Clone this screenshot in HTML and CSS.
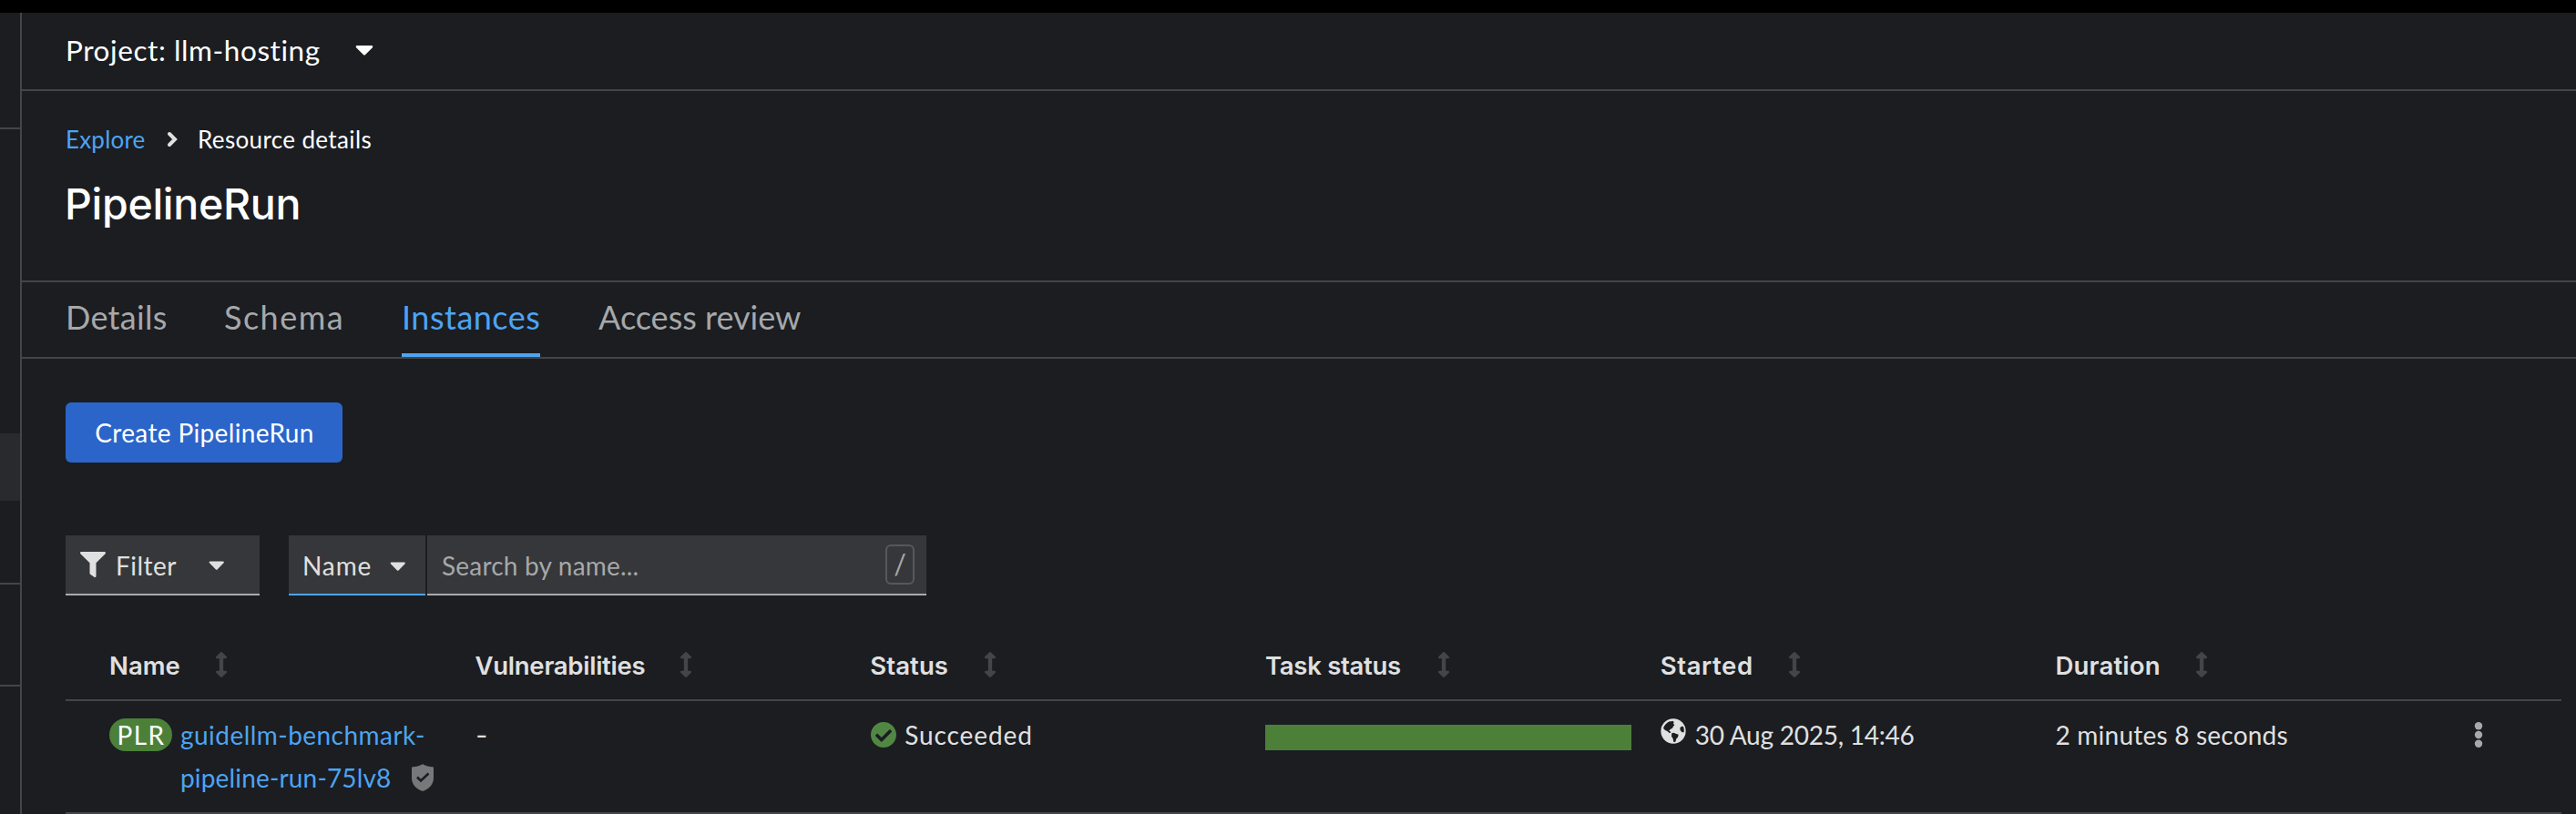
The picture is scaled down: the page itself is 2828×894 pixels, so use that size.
FILE: index.html
```
<!DOCTYPE html>
<html lang="en">
<head>
<meta charset="utf-8">
<title>PipelineRun</title>
<link rel="stylesheet" href="styles.css">
</head>
<body>
<svg class="defs" aria-hidden="true">
  <symbol id="caret" viewBox="0 0 320 512"><path d="M31.3 192h257.3c17.8 0 26.7 21.5 14.1 34.1L174.1 354.7c-7.8 7.8-20.5 7.8-28.3 0L17.2 226.1C4.6 213.5 13.5 192 31.3 192z"/></symbol>
  <symbol id="sort" viewBox="0 0 256 512"><path d="M214.059 377.941H168V134.059h46.059c21.382 0 32.09-25.851 16.971-40.971L144.971 7.029c-9.373-9.373-24.568-9.373-33.941 0L24.971 93.088c-15.119 15.119-4.411 40.971 16.971 40.971H88v243.882H41.941c-21.382 0-32.09 25.851-16.971 40.971l86.059 86.059c9.373 9.373 24.568 9.373 33.941 0l86.059-86.059c15.12-15.119 4.412-40.971-16.97-40.971z"/></symbol>
</svg>
<div class="masthead"></div>
<div class="shell">
  <nav class="sidebar">
    <div class="side-block side-first"></div>
    <div class="side-block side-second"><div class="side-current"></div></div>
    <div class="side-block side-third"></div>
  </nav>
  <main class="main">
    <div class="project-bar">
      <span class="project-name">Project: llm-hosting</span>
      <svg class="project-caret"><use href="#caret"/></svg>
    </div>
    <header class="page-head">
      <div class="breadcrumb">
        <a class="crumb-link">Explore</a>
        <svg class="crumb-sep" viewBox="0 0 12 18"><path d="M3 3l6 6-6 6"/></svg>
        <span class="crumb-here">Resource details</span>
      </div>
      <h1 class="title">PipelineRun</h1>
    </header>
    <div class="tabs">
      <a class="tab tab-details">Details</a>
      <a class="tab tab-schema">Schema</a>
      <a class="tab tab-instances active">Instances</a>
      <a class="tab tab-access">Access review</a>
    </div>
    <section class="content">
      <button class="create">Create PipelineRun</button>
      <div class="toolbar">
        <div class="control filter">
          <svg class="filter-icon" viewBox="0 0 512 512"><path d="M487.976 0H24.028C2.71 0-8.047 25.866 7.058 40.971L192 225.941V432c0 7.831 3.821 15.17 10.237 19.662l80 55.98C298.02 518.69 320 507.493 320 487.98V225.941l184.947-184.97C520.021 25.896 509.338 0 487.976 0z"/></svg>
          <span class="filter-label">Filter</span>
          <svg class="control-caret"><use href="#caret"/></svg>
        </div>
        <div class="control attribute">
          <span class="attribute-label">Name</span>
          <svg class="control-caret low"><use href="#caret"/></svg>
        </div>
        <div class="control search">
          <span class="placeholder">Search by name...</span>
          <kbd class="key">/</kbd>
        </div>
      </div>
      <div class="table">
        <div class="row head">
          <div class="th"><span>Name</span><svg class="sort"><use href="#sort"/></svg></div>
          <div class="th"><span class="t-vuln">Vulnerabilities</span><svg class="sort"><use href="#sort"/></svg></div>
          <div class="th"><span class="t-status">Status</span><svg class="sort"><use href="#sort"/></svg></div>
          <div class="th"><span class="t-task">Task status</span><svg class="sort"><use href="#sort"/></svg></div>
          <div class="th"><span class="t-started">Started</span><svg class="sort"><use href="#sort"/></svg></div>
          <div class="th"><span class="t-duration">Duration</span><svg class="sort"><use href="#sort"/></svg></div>
          <div class="th"></div>
        </div>
        <div class="row body">
          <div class="td name-cell">
            <span class="badge">PLR</span>
            <div class="run">
              <a class="run-line first">guidellm-benchmark-</a>
              <div class="run-second">
                <a class="run-line second">pipeline-run-75lv8</a>
                <svg class="shield" viewBox="0 0 24 30"><path class="shield-body" d="M12 0c2 1.700 7 3.200 12 3.500v12c0 7-5 12-12 14.500C5 27.500 0 22.500 0 15.500v-12C5 3.200 10 1.700 12 0z"/><path class="shield-check" d="M6 14.500l4 4 8.500-8"/></svg>
              </div>
            </div>
          </div>
          <div class="td"><span class="dash">-</span></div>
          <div class="td status-cell">
            <svg class="ok" viewBox="8 8 496 496"><path d="M504 256c0 136.967-111.033 248-248 248S8 392.967 8 256 119.033 8 256 8s248 111.033 248 248zM227.314 387.314l184-184c6.248-6.248 6.248-16.379 0-22.627l-22.627-22.627c-6.248-6.249-16.379-6.249-22.628 0L216 308.118l-70.059-70.059c-6.248-6.248-16.379-6.248-22.628 0l-22.627 22.627c-6.248 6.248-6.248 16.379 0 22.627l104 104c6.249 6.249 16.379 6.249 22.628.001z"/></svg>
            <span class="t-succeeded">Succeeded</span>
          </div>
          <div class="td"><div class="progress"></div></div>
          <div class="td started-cell">
            <svg class="globe" viewBox="0 0 84 84"><circle cx="42" cy="42" r="41"/><path d="M9 32C13 22 20 14 30 10l6 0 4-2 4 4-2 5 4 5-4 4-3 6-7 4-4 5 4 2 2 4-5 1-7-6-7-3zM37 49l6-2 7 3 9 3-2 9-5 5-3 10-6 1-2-11-5-8zM64 31l6-5 5 1c2 5 3 12 2 19l-6 0-6-6z"/></svg>
            <span class="t-date">30 Aug 2025, 14:46</span>
          </div>
          <div class="td t-length">2 minutes 8 seconds</div>
          <div class="td kebab-cell"><svg class="kebab" viewBox="0 0 10 28"><circle cx="5" cy="4.300" r="4.200"/><circle cx="5" cy="14" r="4.200"/><circle cx="5" cy="23.700" r="4.200"/></svg></div>
        </div>
      </div>
    </section>
  </main>
</div>
</body>
</html>
```
FILE: styles.css
```
* { box-sizing: border-box; }
body {
  margin: 0;
  height: 894px;
  overflow: hidden;
  background: #1b1d21;
  color: #e0e0e0;
  font: 28px "Lato", sans-serif;
  display: flex;
  flex-direction: column;
}
svg { display: block; flex: none; fill: currentColor; }
.defs { display: none; }
.masthead { height: 14px; flex: none; background: #000; }
.shell { flex: 1; display: flex; min-height: 0; }
.sidebar { width: 24px; flex: none; border-right: 2px solid #444548; }
.side-block { border-bottom: 2px solid #444548; }
.side-first { height: 128px; }
.side-second { height: 500px; padding-top: 334px; }
.side-current { height: 74px; background: #292a2e; }
.side-third { height: 112px; }
.main { flex: 1; min-width: 0; }

.project-bar {
  height: 86px;
  padding: 0 0 4px 48px;
  border-bottom: 2px solid #444548;
  display: flex;
  align-items: center;
  color: #fff;
}
.project-name { width: 318px; font-size: 31.5px; letter-spacing: .58px; white-space: nowrap; padding-top: 2px; }
.project-caret { width: 20px; height: 32px; }

.page-head { height: 210px; padding: 33px 0 0 48px; border-bottom: 2px solid #444548; }
.breadcrumb { height: 40px; display: flex; align-items: center; font-size: 26px; line-height: 42px; }
.crumb-link { width: 111px; color: #4da4f2; letter-spacing: .2px; }
.crumb-sep { width: 12px; height: 18px; margin-right: 22px; fill: none; stroke: #e0e0e0; stroke-width: 4; stroke-linecap: round; }
.crumb-here { color: #fff; letter-spacing: .36px; }
.title { margin: 21px 0 0 -1px; color: #fff; font: 550 46.5px/60px "Inter", sans-serif; letter-spacing: -.3px; }

.tabs { height: 84px; padding-left: 48px; border-bottom: 2px solid #444548; display: flex; gap: 64px; }
.tab { height: 82px; font-size: 36px; line-height: 77px; color: #a6a8aa; border-bottom: 4px solid transparent; white-space: nowrap; }
.tab.active { color: #4da4f2; border-color: #4da4f2; }
.tab-details { width: 110px; letter-spacing: .3px; }
.tab-schema { width: 131px; letter-spacing: 1.500px; }
.tab-instances { width: 152px; letter-spacing: .5px; }

.content { padding: 48px 16px 0 48px; }
.create {
  display: block;
  width: 304px;
  height: 66px;
  padding: 0 0 0 1px;
  border: 0;
  border-radius: 6px;
  background: #2b65c9;
  color: #fff;
  font: 28px/64px "Lato", sans-serif;
  letter-spacing: .36px;
}
.toolbar { margin-top: 80px; display: flex; }
.control { height: 66px; background: #36373a; border-bottom: 2px solid #aaabac; display: flex; align-items: center; line-height: 64px; }
.control-caret { width: 17.500px; height: 28px; }
.control-caret.low { margin-top: 2px; }
.filter { width: 213px; padding-left: 16px; margin-right: 32px; }
.filter-icon { width: 28px; height: 28px; }
.filter-label { width: 102px; margin-left: 11px; letter-spacing: .5px; padding-top: 1px; }
.attribute { width: 150px; padding-left: 15px; border-color: #4da4f2; margin-right: 2px; }
.attribute-label { width: 96px; letter-spacing: .9px; padding-top: 1px; }
.search { width: 548px; padding: 0 13px 0 16px; justify-content: space-between; }
.placeholder { color: #a6a8aa; letter-spacing: .2px; padding-top: 1px; }
.key { width: 32px; height: 44px; border: 2px solid #57585b; border-radius: 6px; color: #a6a8aa; font: 30px/38px "Lato", sans-serif; text-align: center; }

.table { margin-top: 40px; }
.row { display: grid; grid-template-columns: 401.500px repeat(5, 433.750px) 1fr; padding-left: 48px; border-bottom: 2px solid #444548; }
.head { height: 76px; }
.th { display: flex; align-items: center; gap: 38px; font: 600 27.500px/74px "Inter", sans-serif; }
.th span { white-space: nowrap; }
.t-vuln { letter-spacing: -.25px; }
.t-status { letter-spacing: .1px; margin-right: 1px; }
.t-task { letter-spacing: -.28px; margin-right: 2px; }
.t-started { letter-spacing: .6px; }
.t-duration { letter-spacing: .2px; }
.sort { width: 14px; height: 28px; margin-top: -2px; color: #444548; }
.body { height: 124px; padding-top: 13px; line-height: 48px; }
.name-cell { display: flex; }
.badge { width: 69px; height: 36px; margin: 6px 9px 0 0; border-radius: 18px; background: #4c8039; color: #fff; line-height: 36px; text-align: center; letter-spacing: 1.500px; text-indent: 1px; }
.run-line { display: block; color: #4da4f2; white-space: nowrap; }
.run-line.first { height: 47px; letter-spacing: .46px; }
.run-line.second { width: 254px; letter-spacing: .16px; }
.run-second { height: 47px; display: flex; align-items: center; }
.shield { width: 24px; height: 30px; }
.shield-body { fill: #77787a; }
.shield-check { fill: none; stroke: #1b1d21; stroke-width: 2.600; }
.status-cell, .started-cell { display: flex; }
.dash { display: inline-block; transform: scaleX(1.3); transform-origin: left; }
.ok { width: 28px; height: 28px; margin: 10px 9px 0 1px; fill: #518743; }
.t-succeeded { letter-spacing: .9px; }
.progress { width: 402px; height: 28px; margin-top: 13px; background: #4c8039; }
.globe { width: 28px; height: 28px; margin: 6px 10px 0 0; }
.globe path { fill: #1b1d21; }
.t-date { letter-spacing: -.24px; }
.t-length { letter-spacing: .22px; }
.kebab-cell { padding: 10px 0 0 26px; }
.kebab { width: 10px; height: 28px; fill: #a6a8aa; }
```
